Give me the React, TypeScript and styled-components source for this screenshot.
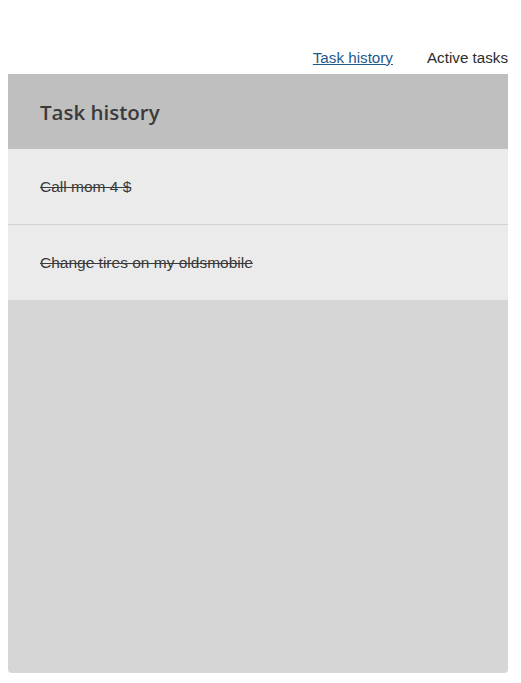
import React from "react";
import styled, { createGlobalStyle } from "styled-components";

const Global = createGlobalStyle`
  html, body { margin: 0; padding: 0; background: #ffffff; }
  body { padding: 8px; font-family: "Liberation Sans", Arial, sans-serif; }
`;

const Page = styled.div`
  width: 500px;
  display: flex;
  flex-direction: column;
`;

const Nav = styled.nav`
  margin-top: 32px;
  height: 34px;
  display: flex;
  justify-content: flex-end;
  align-items: center;
  gap: 34px;
  font-size: 15.2px;
`;

const NavLink = styled.a<{ $active?: boolean }>`
  color: ${(p) => (p.$active ? "#1d5a8c" : "#2b2b2b")};
  text-decoration: ${(p) => (p.$active ? "underline" : "none")};
  cursor: pointer;
`;

const Panel = styled.section`
  height: 599px;
  background: #d6d6d6;
  border-radius: 0 0 4px 4px;
  display: flex;
  flex-direction: column;
  overflow: hidden;
`;

const Header = styled.header`
  height: 75px;
  background: #bfbfbf;
  display: flex;
  align-items: center;
  padding: 0 32px;
`;

const Title = styled.h1`
  margin: 0;
  font-family: "Open Sans", "Noto Sans", sans-serif;
  font-weight: 600;
  font-size: 20.5px;
  color: #3a3a3a;
`;

const List = styled.ul`
  list-style: none;
  margin: 0;
  padding: 0;
`;

const Row = styled.li`
  height: 75px;
  background: #ebebeb;
  display: flex;
  align-items: center;
  padding: 0 32px;
  & + & { border-top: 1px solid #d2d2d2; }
`;

const Done = styled.span`
  font-size: 15.5px;
  color: #3a3a3a;
  text-decoration: line-through;
`;

const tasks = ["Call mom 4 $", "Change tires on my oldsmobile"];

export default function App() {
  return (
    <>
      <Global />
      <Page>
        <Nav>
          <NavLink $active>Task history</NavLink>
          <NavLink>Active tasks</NavLink>
        </Nav>
        <Panel>
          <Header>
            <Title>Task history</Title>
          </Header>
          <List>
            {tasks.map((t) => (
              <Row key={t}>
                <Done>{t}</Done>
              </Row>
            ))}
          </List>
        </Panel>
      </Page>
    </>
  );
}
